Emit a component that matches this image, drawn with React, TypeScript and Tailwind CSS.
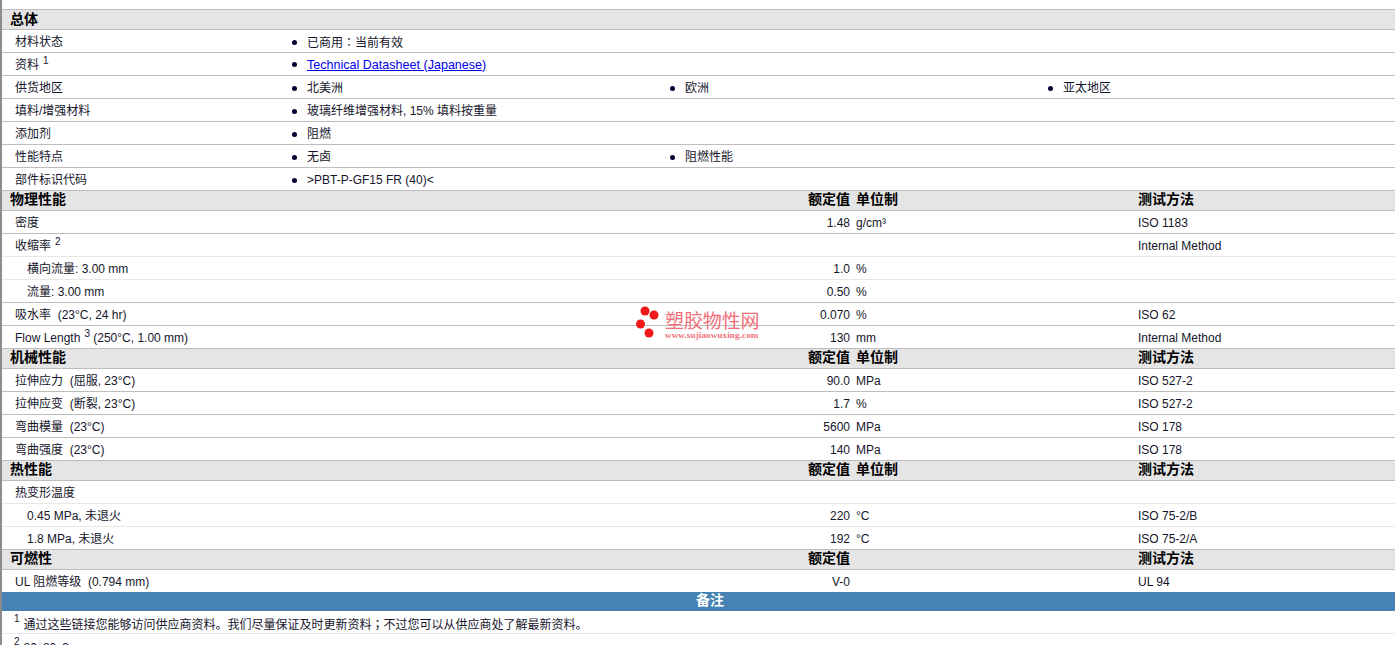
import React from "react";

type DataRow = {
    label: React.ReactNode;
    value?: string;
    unit?: string;
    method?: string;
    indent?: boolean;
    light?: boolean;
};

const font = "[font-family:'Liberation_Sans','Noto_Sans_CJK_SC',sans-serif]";
const jp = "[font-family:'Noto_Sans_CJK_JP',sans-serif]";

const Sup = ({ n }: { n: number }) => <sup className="relative -top-[5px] ml-[4px] align-baseline text-[10px] leading-none">{n}</sup>;

const Bullet = ({ children }: { children: React.ReactNode }) => (
    <div className="flex items-center">
        <span className="mr-[10px] ml-[3px] h-[5px] w-[5px] shrink-0 rounded-full bg-[#000033]" />
        <span className="whitespace-pre">{children}</span>
    </div>
);

function SectionHeader({ title, unit = true, first = false }: { title: string; unit?: boolean; first?: boolean }) {
    return (
        <div className={`flex items-center border-b border-[#bdbdbd] bg-[repeating-conic-gradient(#e2e2e2_0_25%,#e8e8e8_0_50%)] bg-[length:2px_2px] text-[14px] font-bold text-black ${first ? "h-[21px] border-t pb-[1px]" : "h-[20px] pb-[3px]"}`}>
            <div className="w-[806px] shrink-0 pl-[8px]">{title}</div>
            {title !== "总体" && <div className="w-[42px] shrink-0 text-right">额定值</div>}
            <div className="ml-[6px] w-[282px] shrink-0">{title !== "总体" && unit ? "单位制" : ""}</div>
            {title !== "总体" && <div>测试方法</div>}
        </div>
    );
}

function InfoRow({ label, items }: { label: React.ReactNode; items: React.ReactNode[] }) {
    return (
        <div className="flex h-[23px] items-center border-b border-[#bdbdbd] pt-[2px]">
            <div className="w-[287px] shrink-0 pl-[13px]">{label}</div>
            {items.map((item, i) => (
                <div key={i} className="w-[378px] shrink-0">
                    <Bullet>{item}</Bullet>
                </div>
            ))}
        </div>
    );
}

function Row({ label, value, unit, method, indent, light }: DataRow) {
    return (
        <div className={`flex h-[23px] items-center border-b pt-[2px] ${light ? "border-[#e8e8e8]" : "border-[#bdbdbd]"}`}>
            <div className={`w-[806px] shrink-0 whitespace-pre ${indent ? "pl-[25px]" : "pl-[13px]"}`}>{label}</div>
            <div className="w-[42px] shrink-0 text-right">{value}</div>
            <div className="ml-[6px] w-[282px] shrink-0">{unit}</div>
            <div>{method}</div>
        </div>
    );
}

export default function App() {
    return (
        <div className={`relative h-[645px] w-[1395px] overflow-hidden border-l-2 border-[#8c8c8c] bg-white pt-[9px] text-[12px] leading-none text-[#15152b] ${font}`}>
            <SectionHeader title="总体" first />
            <InfoRow label="材料状态" items={[<>已商用<span className={jp}>：</span>当前有效</>]} />
            <InfoRow
                label={<>资料<Sup n={1} /></>}
                items={[<span className="text-[12.55px] text-[#0000ee] underline">Technical Datasheet (Japanese)</span>]}
            />
            <InfoRow label="供货地区" items={["北美洲", "欧洲", "亚太地区"]} />
            <InfoRow label="填料/增强材料" items={["玻璃纤维增强材料, 15% 填料按重量"]} />
            <InfoRow label="添加剂" items={["阻燃"]} />
            <InfoRow label="性能特点" items={["无卤", "阻燃性能"]} />
            <InfoRow label="部件标识代码" items={[">PBT-P-GF15 FR (40)<"]} />

            <SectionHeader title="物理性能" />
            <Row label="密度" value="1.48" unit="g/cm³" method="ISO 1183" />
            <Row label={<>收缩率<Sup n={2} /></>} method="Internal Method" light />
            <Row label="横向流量: 3.00 mm" value="1.0" unit="%" indent light />
            <Row label="流量: 3.00 mm" value="0.50" unit="%" indent />
            <Row label="吸水率  (23°C, 24 hr)" value="0.070" unit="%" method="ISO 62" />
            <Row label={<>Flow Length<Sup n={3} /> (250°C, 1.00 mm)</>} value="130" unit="mm" method="Internal Method" />

            <SectionHeader title="机械性能" />
            <Row label="拉伸应力  (屈服, 23°C)" value="90.0" unit="MPa" method="ISO 527-2" />
            <Row label="拉伸应变  (断裂, 23°C)" value="1.7" unit="%" method="ISO 527-2" />
            <Row label="弯曲模量  (23°C)" value="5600" unit="MPa" method="ISO 178" />
            <Row label="弯曲强度  (23°C)" value="140" unit="MPa" method="ISO 178" />

            <SectionHeader title="热性能" />
            <Row label="热变形温度" light />
            <Row label="0.45 MPa, 未退火" value="220" unit="°C" method="ISO 75-2/B" indent light />
            <Row label="1.8 MPa, 未退火" value="192" unit="°C" method="ISO 75-2/A" indent />

            <SectionHeader title="可燃性" unit={false} />
            <div className="flex h-[22px] items-center pt-[2px]">
                <div className="w-[806px] shrink-0 whitespace-pre pl-[13px]">UL 阻燃等级  (0.794 mm)</div>
                <div className="w-[42px] shrink-0 text-right">V-0</div>
                <div className="ml-[6px] w-[282px] shrink-0" />
                <div>UL 94</div>
            </div>

            <div className="flex h-[19px] items-center justify-center bg-[#4682b4] pb-[3px] pl-[23px] text-[14px] font-bold text-white">备注</div>
            <div className="flex h-[23px] items-center border-b border-[#e8e8e8] pl-[8px] pt-[4px]">
                <Sup n={1} />
                <span className="ml-[4px]">通过这些链接您能够访问供应商资料。我们尽量保证及时更新资料<span className={jp}>；</span>不过您可以从供应商处了解最新资料。</span>
            </div>
            <div className="flex h-[23px] items-start pl-[8px] pt-[8px]">
                <Sup n={2} />
                <span className="ml-[4px]">80x80x3 mm</span>
            </div>

            {/* watermark */}
            <div className="absolute left-[632px] top-[304px] flex items-start">
                <svg width="26" height="34" viewBox="0 0 26 34" className="shrink-0">
                    <circle cx="11" cy="7" r="4.5" fill="#f01818" />
                    <circle cx="20" cy="11" r="4.5" fill="#f01818" />
                    <circle cx="6.5" cy="20" r="4.5" fill="#f01818" />
                    <circle cx="15" cy="29" r="4.5" fill="#f01818" />
                </svg>
                <div className="ml-[5px] pt-[8px]">
                    <div className="text-[19px] leading-[19px] tracking-[-0.1px] text-[#f0707a]">塑胶物性网</div>
                    <div className="text-[9px] font-bold leading-[9px] tracking-[0.15px] text-[#f0707a] [font-family:'Liberation_Serif',serif]">www.sujiaowuxing.com</div>
                </div>
            </div>
        </div>
    );
}
